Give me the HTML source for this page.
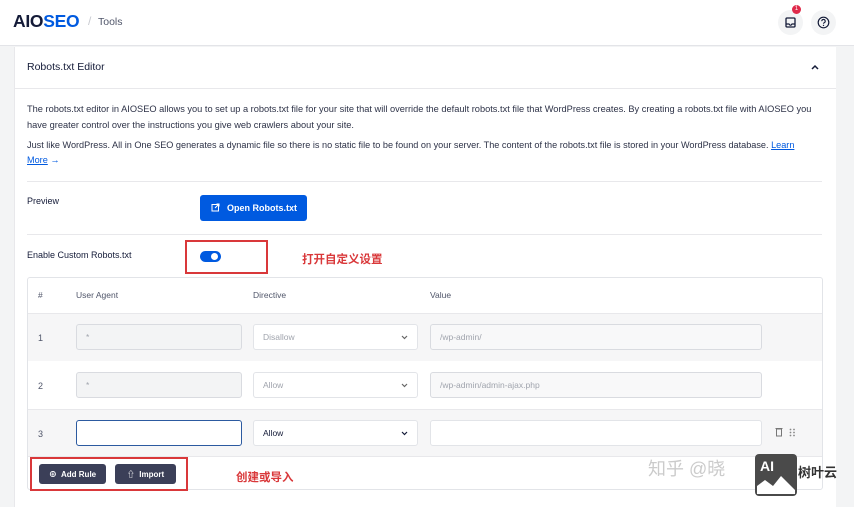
<!DOCTYPE html>
<html><head><meta charset="utf-8"><style>
*{box-sizing:border-box;margin:0;padding:0}
body{width:854px;height:500px;overflow:hidden;background:#f3f4f5;font-family:"Liberation Sans","Noto Sans CJK SC",sans-serif;color:#141b38;position:relative}
.abs{position:absolute}
.hdr{left:0;top:0;width:854px;height:46px;background:#fff;border-bottom:1px solid #e3e4e8}
.card{left:14px;top:47px;width:822px;height:460px;background:#fff;border-left:1px solid #e8e8eb}
.t{font-size:9px;color:#141b38;white-space:nowrap}
.line{height:1px;background:#e8e8eb}
.inp{height:26px;border:1px solid #d9dbe0;border-radius:3px;background:#f3f4f5;font-size:8.5px;color:#a0a4ad;padding:7px 9px}
.sel{height:26px;border:1px solid #e2e4e8;border-radius:3px;background:#fff;font-size:8.5px;color:#a0a4ad;padding:7px 9px}
.chev{position:absolute;right:9px;top:10px}
.btn{background:#3b3f58;color:#fff;font-size:8px;font-weight:bold;border-radius:3px;height:20px;padding:5px 0;text-align:center}
.red{border:2px solid #d9383a}
.cn{color:#d9383a;font-weight:bold;font-size:11.5px}
</style></head><body>
<div class="abs hdr"></div>
<div class="abs" style="left:13px;top:11px;font-size:17.5px;font-weight:bold;letter-spacing:-0.3px"><span style="color:#141b38">AIO</span><span style="color:#005ae0">SEO</span></div>
<div class="abs" style="left:88px;top:14px;font-size:12px;color:#c8cad0">/</div>
<div class="abs" style="left:98px;top:16px;font-size:10.5px;color:#50566a">Tools</div>
<div class="abs" style="left:778px;top:10px;width:25px;height:25px;border-radius:50%;background:#f3f4f5"></div>
<svg class="abs" style="left:785px;top:17px" width="11" height="11" viewBox="0 0 11 11"><rect x="1" y="1" width="9" height="9" rx="1" fill="none" stroke="#141b38" stroke-width="1.3"/><path d="M1 7h3l1 1.2h1L7 7h3" fill="none" stroke="#141b38" stroke-width="1.2"/></svg>
<div class="abs" style="left:792px;top:5px;width:9px;height:9px;border-radius:50%;background:#df2a4a;color:#fff;font-size:6px;text-align:center;line-height:9px">1</div>
<div class="abs" style="left:811px;top:10px;width:25px;height:25px;border-radius:50%;background:#f3f4f5"></div>
<svg class="abs" style="left:817px;top:16px" width="13" height="13" viewBox="0 0 13 13"><circle cx="6.5" cy="6.5" r="5.3" fill="none" stroke="#141b38" stroke-width="1.2"/><path d="M4.8 5.2a1.7 1.7 0 1 1 2.4 1.5c-.5.3-.7.6-.7 1.1" fill="none" stroke="#141b38" stroke-width="1.1"/><circle cx="6.5" cy="9.4" r=".7" fill="#141b38"/></svg>

<div class="abs card"></div>
<div class="abs t" style="left:27px;top:61px;font-size:10.5px">Robots.txt Editor</div>
<svg class="abs" style="left:810px;top:64px" width="10" height="7" viewBox="0 0 10 7"><path d="M2 5l3-3 3 3" fill="none" stroke="#141b38" stroke-width="1.5"/></svg>
<div class="abs line" style="left:15px;top:88px;width:821px"></div>
<div class="abs t" style="left:27px;top:101px;font-size:9.25px;line-height:16px;color:#2d3247">The robots.txt editor in AIOSEO allows you to set up a robots.txt file for your site that will override the default robots.txt file that WordPress creates. By creating a robots.txt file with AIOSEO you<br>have greater control over the instructions you give web crawlers about your site.</div>
<div class="abs t" style="left:27px;top:138px;font-size:9.15px;line-height:15px;color:#2d3247">Just like WordPress. All in One SEO generates a dynamic file so there is no static file to be found on your server. The content of the robots.txt file is stored in your WordPress database. <span style="color:#005ae0;text-decoration:underline">Learn</span><br><span style="color:#005ae0;text-decoration:underline">More</span> <span style="color:#005ae0">→</span></div>
<div class="abs line" style="left:27px;top:181px;width:795px"></div>
<div class="abs t" style="left:27px;top:196px">Preview</div>
<div class="abs" style="left:200px;top:195px;width:107px;height:26px;background:#005ae0;border-radius:3px;color:#fff;font-size:9px;font-weight:bold;padding:8px 0 0 27px">Open Robots.txt</div>
<svg class="abs" style="left:211px;top:203px" width="9" height="9" viewBox="0 0 9 9"><rect x="1" y="1.5" width="6.5" height="6.5" fill="none" stroke="#fff" stroke-width="1"/><path d="M4 5l4-4M5.5 1H8v2.5" fill="none" stroke="#fff" stroke-width="1"/></svg>
<div class="abs line" style="left:27px;top:234px;width:795px"></div>
<div class="abs t" style="left:27px;top:250px">Enable Custom Robots.txt</div>
<div class="abs" style="left:200px;top:251px;width:21px;height:11px;border-radius:6px;background:#005ae0"></div>
<div class="abs" style="left:211px;top:253px;width:7px;height:7px;border-radius:50%;background:#fff"></div>
<div class="abs red" style="left:185px;top:240px;width:83px;height:34px"></div>
<div class="abs cn" style="left:302px;top:251px">打开自定义设置</div>

<div class="abs" style="left:27px;top:277px;width:796px;height:213px;border:1px solid #e2e4e8;border-radius:3px"></div>
<div class="abs t" style="left:38px;top:290px;color:#50566a;font-size:8.5px">#</div>
<div class="abs t" style="left:76px;top:290px;color:#50566a;font-size:8.5px">User Agent</div>
<div class="abs t" style="left:253px;top:290px;color:#50566a;font-size:8.5px">Directive</div>
<div class="abs t" style="left:430px;top:290px;color:#50566a;font-size:8.5px">Value</div>
<div class="abs line" style="left:28px;top:313px;width:794px"></div>
<div class="abs" style="left:28px;top:314px;width:794px;height:47px;background:#f6f6f7"></div>
<div class="abs" style="left:28px;top:409px;width:794px;height:48px;background:#f6f6f7;border-top:1px solid #e8e8eb;border-bottom:1px solid #e8e8eb"></div>

<div class="abs t" style="left:38px;top:333px;color:#50566a">1</div>
<div class="abs inp" style="left:76px;top:324px;width:166px">*</div>
<div class="abs sel" style="left:253px;top:324px;width:165px">Disallow<svg class="chev" width="7" height="5" viewBox="0 0 7 5"><path d="M1 1l2.5 2.5L6 1" fill="none" stroke="#666" stroke-width="1.2"/></svg></div>
<div class="abs inp" style="left:430px;top:324px;width:332px;background:#f8f8f9">/wp-admin/</div>

<div class="abs t" style="left:38px;top:381px;color:#50566a">2</div>
<div class="abs inp" style="left:76px;top:372px;width:166px">*</div>
<div class="abs sel" style="left:253px;top:372px;width:165px">Allow<svg class="chev" width="7" height="5" viewBox="0 0 7 5"><path d="M1 1l2.5 2.5L6 1" fill="none" stroke="#666" stroke-width="1.2"/></svg></div>
<div class="abs inp" style="left:430px;top:372px;width:332px;background:#f8f8f9">/wp-admin/admin-ajax.php</div>

<div class="abs t" style="left:38px;top:429px;color:#50566a">3</div>
<div class="abs" style="left:76px;top:420px;width:166px;height:26px;border:1.5px solid #2c5aa0;border-radius:3px;background:#fff"></div>
<div class="abs sel" style="left:253px;top:420px;width:165px;color:#141b38">Allow<svg class="chev" width="7" height="5" viewBox="0 0 7 5"><path d="M1 1l2.5 2.5L6 1" fill="none" stroke="#141b38" stroke-width="1.2"/></svg></div>
<div class="abs sel" style="left:430px;top:420px;width:332px"></div>
<svg class="abs" style="left:775px;top:427px" width="8" height="10" viewBox="0 0 8 10"><rect x="1.5" y="2" width="5" height="7" fill="none" stroke="#777" stroke-width="1"/><path d="M0.5 1.5h7" stroke="#777"/></svg>
<svg class="abs" style="left:789px;top:428px" width="7" height="9" viewBox="0 0 7 9"><g fill="#888"><circle cx="1.5" cy="1.5" r=".9"/><circle cx="5" cy="1.5" r=".9"/><circle cx="1.5" cy="4.5" r=".9"/><circle cx="5" cy="4.5" r=".9"/><circle cx="1.5" cy="7.5" r=".9"/><circle cx="5" cy="7.5" r=".9"/></g></svg>

<div class="abs btn" style="left:39px;top:464px;width:67px">⊕&nbsp; Add Rule</div>
<div class="abs btn" style="left:115px;top:464px;width:61px">⇧&nbsp; Import</div>
<div class="abs red" style="left:30px;top:457px;width:158px;height:34px"></div>
<div class="abs cn" style="left:236px;top:469px">创建或导入</div>

<div class="abs" style="left:648px;top:455px;font-size:18px;color:rgba(160,160,160,.55);white-space:nowrap">知乎 @晓</div>
<div class="abs" style="left:755px;top:454px;width:42px;height:42px;background:#4a4a4a;border-radius:4px"></div>
<div class="abs" style="left:760px;top:458px;font-size:14px;font-weight:bold;color:#fff">AI</div>
<svg class="abs" style="left:757px;top:474px" width="38" height="20" viewBox="0 0 38 20"><path d="M0 20V12l8-6 8 6 8-10 14 14v4z" fill="#fff"/></svg>
<div class="abs" style="left:798px;top:462px;font-size:13px;font-weight:bold;color:#333">树叶云</div>
</body></html>
